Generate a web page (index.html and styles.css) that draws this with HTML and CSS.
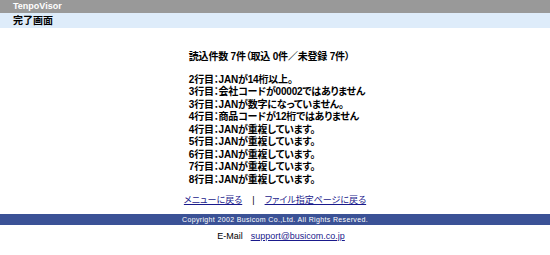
FILE: index.html
```html
<!DOCTYPE html>
<html lang="ja">
<head>
  <meta charset="UTF-8">
  <title>TenpoVisor - 完了画面</title>
  <link rel="stylesheet" href="styles.css">
</head>
<body>
  <div class="topbar">TenpoVisor</div>
  <div class="titlebar">完了画面</div>

  <div class="result">
    <div class="result-box">
      <p class="summary">読込件数 7件（取込 0件／未登録 7件）</p>
      <ul class="errors">
        <li>2行目：JANが14桁以上。</li>
        <li>3行目：会社コードが00002ではありません</li>
        <li>3行目：JANが数字になっていません。</li>
        <li>4行目：商品コードが12桁ではありません</li>
        <li>4行目：JANが重複しています。</li>
        <li>5行目：JANが重複しています。</li>
        <li>6行目：JANが重複しています。</li>
        <li>7行目：JANが重複しています。</li>
        <li>8行目：JANが重複しています。</li>
      </ul>
    </div>
  </div>

  <div class="links">
    <a href="#">メニューに戻る</a>
    <span class="sep">|</span>
    <a href="#">ファイル指定ページに戻る</a>
  </div>

  <div class="copyright">Copyright 2002 Busicom Co.,Ltd. All Rights Reserved.</div>
  <div class="contact">
    <span>E-Mail</span>
    <a href="#">support@busicom.co.jp</a>
  </div>
</body>
</html>
```

FILE: styles.css
```css
body {
  margin: 0;
  font-family: "Liberation Sans", "Noto Sans CJK JP", sans-serif;
  font-size: 10px;
  color: #000;
  background-color: #fff;
}

.topbar {
  height: 13px;
  line-height: 13px;
  padding-left: 13px;
  background-color: #999999;
  color: #fff;
  font-weight: bold;
  font-size: 9px;
}

.titlebar {
  height: 15px;
  line-height: 15px;
  padding-left: 13px;
  background-color: #deecfa;
  font-weight: bold;
  font-size: 10px;
}

.result {
  display: flex;
  justify-content: center;
  padding-top: 23px;
  padding-left: 4px;
}

.result-box {
  font-weight: bold;
  font-size: 10px;
  line-height: 12.5px;
  font-feature-settings: "palt";
  letter-spacing: -0.2px;
}

.summary {
  margin: 0 0 10px 0;
}

.errors {
  list-style: none;
  margin: 0;
  padding: 0;
}

.links {
  display: flex;
  justify-content: center;
  gap: 10px;
  margin-top: 8px;
  font-size: 9px;
  line-height: 12px;
  font-feature-settings: "palt";
}

.links a,
.contact a {
  color: #1a1a8c;
}

.copyright {
  margin-top: 8px;
  height: 11px;
  line-height: 11px;
  background-color: #3b5296;
  color: #fff;
  text-align: center;
  font-size: 7px;
  letter-spacing: 0.35px;
}

.contact {
  display: flex;
  justify-content: center;
  gap: 8px;
  margin-top: 5px;
  padding-left: 12px;
  font-size: 9px;
  line-height: 12px;
}
```
